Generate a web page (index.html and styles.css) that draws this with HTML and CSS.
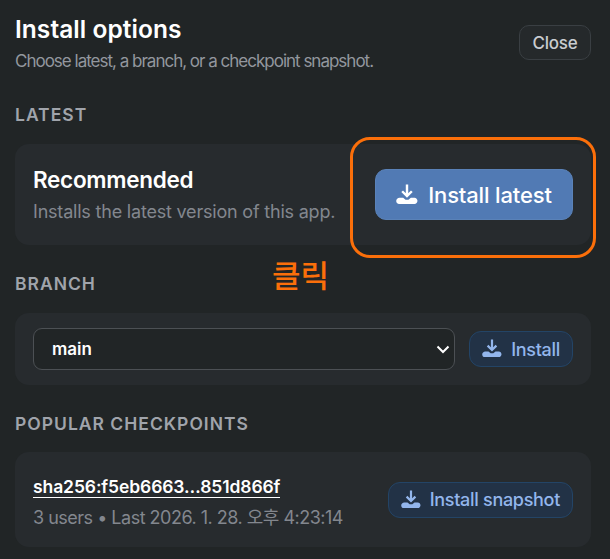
FILE: index.html
```html
<!DOCTYPE html>
<html lang="en">
	<head>
		<meta charset="UTF-8" />
		<meta name="viewport" content="width=device-width, initial-scale=1.0" />
		<title>Install options</title>
		<link rel="stylesheet" href="styles.css">
	</head>

	<body>
		<svg class="icon-defs" width="0" height="0">
			<symbol id="icon-install" viewBox="0 0 20 20">
				<path d="M10 0.5v10.2M5.6 6.6l4.4 4.4 4.4-4.4" fill="none" stroke="currentColor" stroke-width="2.2" />
				<path d="M3.2 12.4h3.3l2.2 1.9h2.6l2.2-1.9h3.3c1.5 0 2.7 1.3 2.7 2.8s-1.2 2.9-2.7 2.9H2.8C1.3 18.1 0.2 16.9 0.2 15.4c0-1.6 1.4-3 3-3z" fill="currentColor" />
			</symbol>
		</svg>

		<div class="panel">
			<div class="panel-head">
				<div>
					<h1 class="panel-title">Install options</h1>
					<p class="panel-sub">Choose latest, a branch, or a checkpoint snapshot.</p>
				</div>
				<button class="btn-close">Close</button>
			</div>

			<h2 class="section-label latest-label">LATEST</h2>
			<div class="card card-latest">
				<div>
					<div class="card-title">Recommended</div>
					<div class="card-meta">Installs the latest version of this app.</div>
				</div>
				<button class="btn-primary">
					<svg class="icon icon-lg"><use href="#icon-install"></use></svg>
					Install latest
				</button>
			</div>

			<h2 class="section-label">BRANCH</h2>
			<div class="card card-branch">
				<div class="select-box">
					<span>main</span>
					<svg class="chevron" viewBox="0 0 14 9"><path d="M1.5 1.5L7 7l5.5-5.5" fill="none" stroke="currentColor" stroke-width="2" /></svg>
				</div>
				<button class="btn-soft">
					<svg class="icon"><use href="#icon-install"></use></svg>
					Install
				</button>
			</div>

			<h2 class="section-label">POPULAR CHECKPOINTS</h2>
			<div class="card card-check">
				<div class="check-info">
					<a class="check-hash">sha256:f5eb6663…851d866f</a>
					<div class="card-meta check-meta">3 users • Last 2026. 1. 28. 오후 4:23:14</div>
				</div>
				<button class="btn-soft">
					<svg class="icon"><use href="#icon-install"></use></svg>
					Install snapshot
				</button>
			</div>
		</div>

		<!-- annotation drawn over the screenshot -->
		<div class="callout-box"></div>
		<div class="callout-text">클릭</div>
	</body>
</html>
```

FILE: styles.css
```css
* {
	box-sizing: border-box;
}

html,
body {
	height: 100%;
}

body {
	margin: 0;
	position: relative;
	overflow: hidden;
	background: #212526;
	color: #fff;
	font-family: Inter, "Noto Sans CJK KR", sans-serif;
}

.icon-defs {
	position: absolute;
}

.panel {
	padding: 15px 19px 0 15px;
}

.panel-head {
	display: flex;
	justify-content: space-between;
	align-items: flex-start;
}

.panel-title {
	margin: 0;
	font-size: 24.5px;
	line-height: 28px;
	font-weight: 600;
	letter-spacing: 0.05px;
}

.panel-sub {
	margin: 6px 0 0;
	font-size: 17px;
	line-height: 24px;
	color: #93979e;
	letter-spacing: -1px;
}

.btn-close {
	margin-top: 10px;
	width: 72px;
	height: 35px;
	border: 1px solid #3a3f43;
	border-radius: 10px;
	background: #25292b;
	color: #c9ccd0;
	font: 500 17px Inter, sans-serif;
	letter-spacing: -0.2px;
}

.section-label {
	margin: 29px 0 0;
	font-size: 17.5px;
	line-height: 20px;
	font-weight: 600;
	letter-spacing: 1px;
	color: #a0a4ab;
}

.latest-label {
	margin-top: 32px;
}

.card {
	display: flex;
	justify-content: space-between;
	align-items: center;
	margin-top: 19px;
	padding: 0 18px;
	background: #272b2e;
	border-radius: 14px;
}

.card-latest {
	height: 101px;
}

.card-branch {
	height: 72px;
}

.card-check {
	height: 95px;
	margin-top: 18px;
}

.card-title {
	font-size: 22.5px;
	line-height: 26px;
	font-weight: 600;
	letter-spacing: -0.3px;
}

.card-meta {
	margin-top: 8px;
	font-size: 18px;
	line-height: 22px;
	color: #83878e;
	letter-spacing: -0.2px;
}

.btn-primary {
	display: flex;
	align-items: center;
	justify-content: center;
	gap: 10px;
	width: 198px;
	height: 51px;
	border: 1px solid #5a82b8;
	border-radius: 11px;
	background: #517ab4;
	color: #fff;
	font: 500 22px Inter, sans-serif;
	letter-spacing: -0.15px;
}

.btn-soft {
	display: flex;
	align-items: center;
	gap: 9px;
	height: 36px;
	padding: 0 12px;
	border: 1px solid #234466;
	border-radius: 12px;
	background: #223246;
	color: #93b6ec;
	font: 500 18px Inter, sans-serif;
	letter-spacing: -0.3px;
}

.icon {
	width: 20px;
	height: 20px;
}

.icon-lg {
	width: 22px;
	height: 22px;
}

.select-box {
	display: flex;
	align-items: center;
	justify-content: space-between;
	width: 422px;
	height: 42px;
	padding: 0 4px 0 18px;
	border: 1px solid #4c5054;
	border-radius: 9px;
	background: #212526;
	font-size: 17px;
	font-weight: 600;
}

.chevron {
	width: 14px;
	height: 9px;
}

.check-info {
	padding-top: 7px;
}

.check-hash {
	display: inline-block;
	font-size: 17.5px;
	line-height: 20px;
	font-weight: 600;
	border-bottom: 1px solid #fff;
	letter-spacing: -0.1px;
}

.check-meta {
	margin-top: 9px;
	letter-spacing: -0.5px;
}

.callout-box {
	position: absolute;
	left: 350px;
	top: 137px;
	width: 246px;
	height: 121px;
	border: 3px solid #fb6f0a;
	border-radius: 20px;
}

.callout-text {
	position: absolute;
	left: 272px;
	top: 257px;
	font-size: 31px;
	line-height: 38px;
	font-weight: 500;
	color: #fb6f0a;
}
```
